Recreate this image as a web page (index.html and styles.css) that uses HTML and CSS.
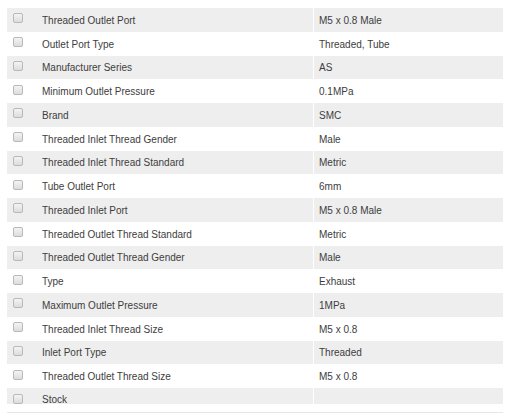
FILE: index.html
```html
<!DOCTYPE html>
<html>
<head>
<meta charset="utf-8">
<link rel="stylesheet" href="styles.css">
</head>
<body>
<div class="specs">
<table class="spec-table">
<tbody>
<tr><td class="chk"><span class="box"></span></td><td class="name">Threaded Outlet Port</td><td class="val">M5 x 0.8 Male</td></tr>
<tr><td class="chk"><span class="box"></span></td><td class="name">Outlet Port Type</td><td class="val">Threaded, Tube</td></tr>
<tr><td class="chk"><span class="box"></span></td><td class="name">Manufacturer Series</td><td class="val">AS</td></tr>
<tr><td class="chk"><span class="box"></span></td><td class="name">Minimum Outlet Pressure</td><td class="val">0.1MPa</td></tr>
<tr><td class="chk"><span class="box"></span></td><td class="name">Brand</td><td class="val">SMC</td></tr>
<tr><td class="chk"><span class="box"></span></td><td class="name">Threaded Inlet Thread Gender</td><td class="val">Male</td></tr>
<tr><td class="chk"><span class="box"></span></td><td class="name">Threaded Inlet Thread Standard</td><td class="val">Metric</td></tr>
<tr><td class="chk"><span class="box"></span></td><td class="name">Tube Outlet Port</td><td class="val">6mm</td></tr>
<tr><td class="chk"><span class="box"></span></td><td class="name">Threaded Inlet Port</td><td class="val">M5 x 0.8 Male</td></tr>
<tr><td class="chk"><span class="box"></span></td><td class="name">Threaded Outlet Thread Standard</td><td class="val">Metric</td></tr>
<tr><td class="chk"><span class="box"></span></td><td class="name">Threaded Outlet Thread Gender</td><td class="val">Male</td></tr>
<tr><td class="chk"><span class="box"></span></td><td class="name">Type</td><td class="val">Exhaust</td></tr>
<tr><td class="chk"><span class="box"></span></td><td class="name">Maximum Outlet Pressure</td><td class="val">1MPa</td></tr>
<tr><td class="chk"><span class="box"></span></td><td class="name">Threaded Inlet Thread Size</td><td class="val">M5 x 0.8</td></tr>
<tr><td class="chk"><span class="box"></span></td><td class="name">Inlet Port Type</td><td class="val">Threaded</td></tr>
<tr><td class="chk"><span class="box"></span></td><td class="name">Threaded Outlet Thread Size</td><td class="val">M5 x 0.8</td></tr>
<tr class="cut"><td class="chk"><span class="box"></span></td><td class="name"><div class="cut-text">Stock</div></td><td class="val"><div class="cut-text"></div></td></tr>
</tbody>
</table>
</div>
<div class="rule"></div>
</body>
</html>
```
FILE: styles.css
```css
html, body {
  background: #fff;
}
body {
  margin: 8px 6px 0 7px;
  font-family: "Liberation Sans", Arial, sans-serif;
  font-size: 10px;
  color: #3d3d3d;
}
.specs {
  width: 496px;
  height: 393px;
}
.spec-table {
  width: 100%;
  border-collapse: collapse;
  table-layout: fixed;
}
.spec-table tr {
  height: 23.75px;
}
.spec-table tr:nth-child(odd) {
  background: #eeeeee;
}
.spec-table td {
  padding: 1px 0 0;
  vertical-align: middle;
  white-space: nowrap;
}
.chk {
  width: 35px;
}
.name {
  width: 271px;
}
.val {
  border-left: 1px solid #fff;
  padding-left: 5px !important;
}
.box {
  display: block;
  width: 8px;
  height: 8px;
  margin-left: 6px;
  margin-top: -4px;
  border: 1px solid #b9b9b9;
  border-radius: 2px;
  background: linear-gradient(#f4f4f4, #dcdcdc);
}
.spec-table tr.cut {
  height: 13px;
}
.spec-table tr.cut td {
  vertical-align: top;
}
.cut .box {
  margin-top: 5px;
}
.cut-text {
  height: 12px;
  line-height: 21px;
  overflow: visible;
}
.rule {
  width: 496px;
  height: 1px;
  margin-top: 11px;
  background: #e6e6e6;
}
```
